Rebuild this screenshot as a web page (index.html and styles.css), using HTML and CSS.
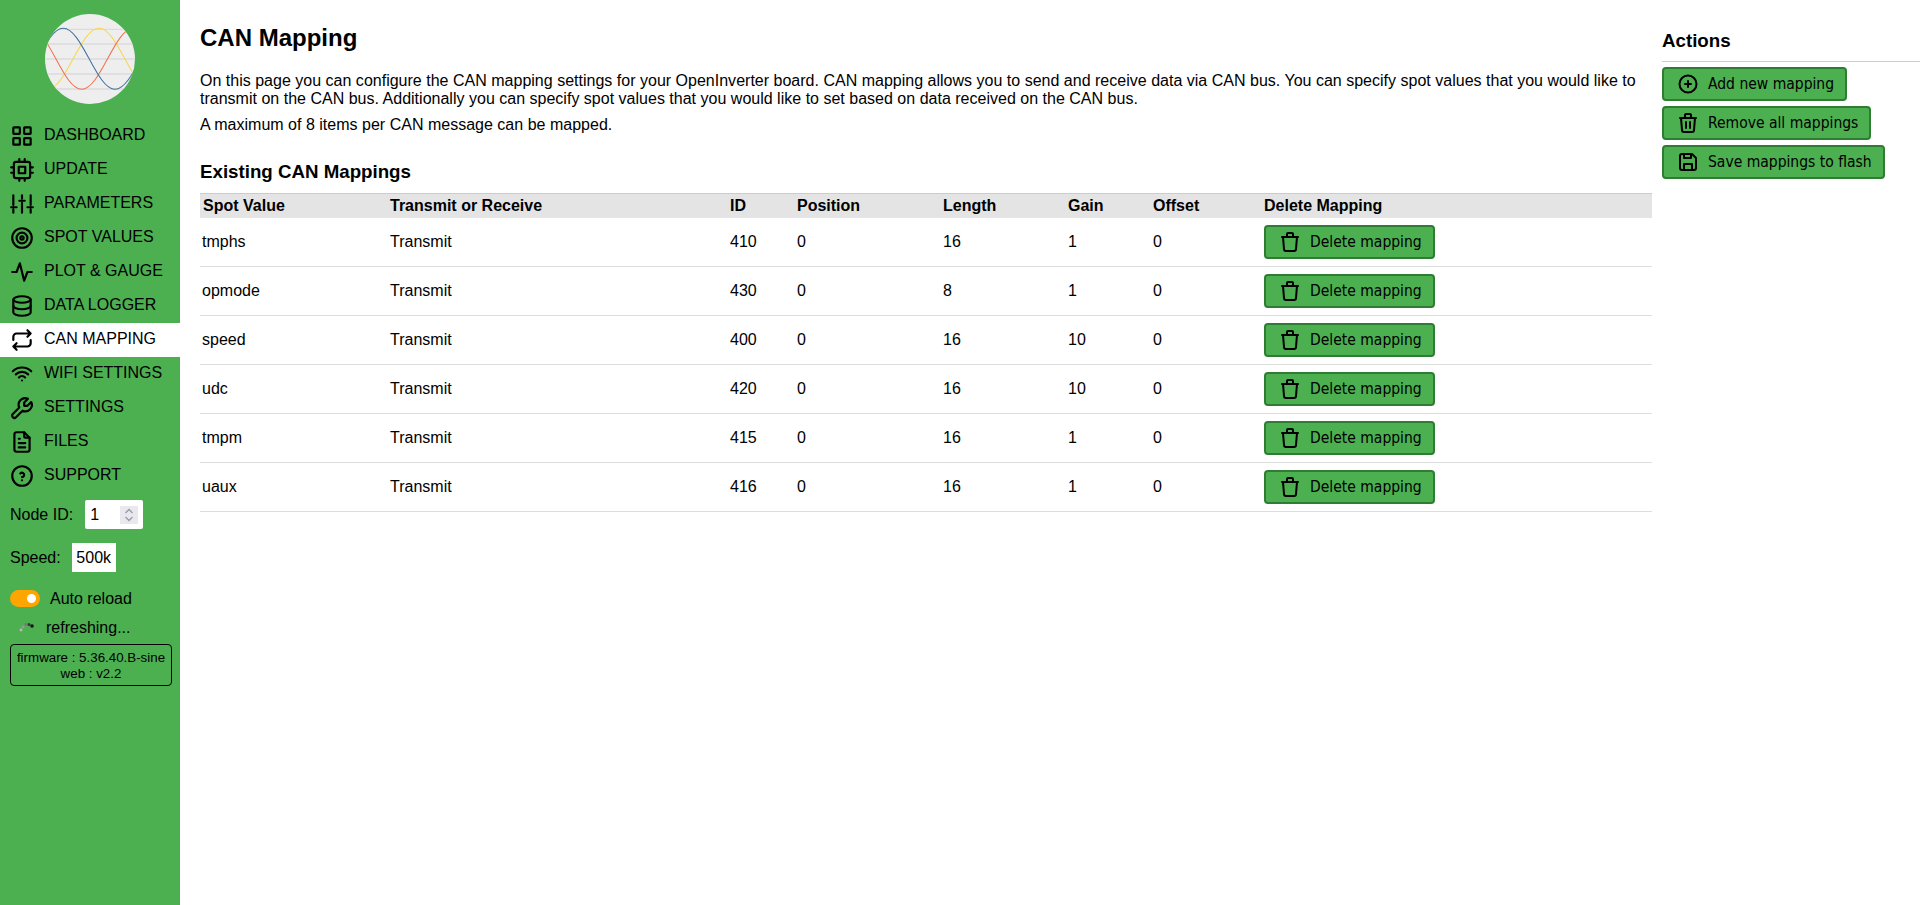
FILE: index.html
```html
<!DOCTYPE html>
<html lang="en">
<head>
<meta charset="utf-8">
<title>CAN Mapping</title>
<link rel="stylesheet" href="styles.css">
</head>
<body>
<svg class="sprite" width="0" height="0">
  <defs>
    <symbol id="i-grid" viewBox="0 0 24 24"><rect x="4" y="4" width="6" height="6" rx="0.5"/><rect x="14" y="4" width="6" height="6" rx="0.5"/><rect x="4" y="14" width="6" height="6" rx="0.5"/><rect x="14" y="14" width="6" height="6" rx="0.5"/></symbol>
    <symbol id="i-cpu" viewBox="0 0 24 24"><rect x="4.5" y="4.5" width="15" height="15" rx="2"/><path d="M9 9h6v6h-6z"/><path d="M2 9.500h2M2 14.500h2M9.500 2v2M14.500 2v2M22 9.500h-2M22 14.500h-2M14.500 22v-2M9.500 22v-2"/></symbol>
    <symbol id="i-sliders" viewBox="0 0 24 24"><path d="M4 4v9M4 17v3M12 4v3M12 11v9M20 4v9M20 17v3M2 15h5M9.500 9h5M17 15h5"/></symbol>
    <symbol id="i-target" viewBox="0 0 24 24"><circle cx="12" cy="12" r="1.500"/><circle cx="12" cy="12" r="5"/><circle cx="12" cy="12" r="9"/></symbol>
    <symbol id="i-activity" viewBox="0 0 24 24"><path d="M3 12h4l3 -8l4 16l3 -8h4"/></symbol>
    <symbol id="i-db" viewBox="0 0 24 24"><ellipse cx="12" cy="6" rx="8" ry="3"/><path d="M4 6v6a8 3 0 0 0 16 0v-6"/><path d="M4 12v6a8 3 0 0 0 16 0v-6"/></symbol>
    <symbol id="i-repeat" viewBox="0 0 24 24"><path d="M4 12v-3a3 3 0 0 1 3 -3h13m-3 -3l3 3l-3 3"/><path d="M20 12v3a3 3 0 0 1 -3 3h-13m3 3l-3 -3l3 -3"/></symbol>
    <symbol id="i-wifi" viewBox="0 0 24 24"><path d="M12 18l.01 0"/><path d="M9.172 15.172a4 4 0 0 1 5.656 0"/><path d="M6.343 12.343a8 8 0 0 1 11.314 0"/><path d="M3.515 9.515c4.686 -4.687 12.284 -4.687 17 0"/></symbol>
    <symbol id="i-tool" viewBox="0 0 24 24"><path d="M17 10h-3v-3l3.500 -3.500a6 6 0 0 0 -8 8l-6 6a2 2 0 0 0 3 3l6 -6a6 6 0 0 0 8 -8l-3.500 3.500"/></symbol>
    <symbol id="i-file" viewBox="0 0 24 24"><path d="M14 3v4a1 1 0 0 0 1 1h4"/><path d="M17 21h-10a2 2 0 0 1 -2 -2v-14a2 2 0 0 1 2 -2h7l5 5v11a2 2 0 0 1 -2 2z"/><path d="M9 9h1M9 13h6M9 17h6"/></symbol>
    <symbol id="i-help" viewBox="0 0 24 24"><circle cx="12" cy="12" r="9"/><path d="M12 16v.01"/><path d="M12 13a2 2 0 0 0 .914 -3.782a1.98 1.98 0 0 0 -2.414 .483"/></symbol>
    <symbol id="i-plus" viewBox="0 0 24 24"><circle cx="12" cy="12" r="8.500"/><path d="M9 12h6M12 9v6"/></symbol>
    <symbol id="i-trash" viewBox="0 0 24 24"><path d="M4 7h16"/><path d="M10 11v6M14 11v6"/><path d="M5 7l1 12a2 2 0 0 0 2 2h8a2 2 0 0 0 2 -2l1 -12"/><path d="M9 7v-3a1 1 0 0 1 1 -1h4a1 1 0 0 1 1 1v3"/></symbol>
    <symbol id="i-trash2" viewBox="0 0 24 24"><path d="M4 7h16"/><path d="M5 7l1 12a2 2 0 0 0 2 2h8a2 2 0 0 0 2 -2l1 -12"/><path d="M9 7v-3a1 1 0 0 1 1 -1h4a1 1 0 0 1 1 1v3"/></symbol>
    <symbol id="i-save" viewBox="0 0 24 24"><path d="M6 4h10l4 4v10a2 2 0 0 1 -2 2h-12a2 2 0 0 1 -2 -2v-12a2 2 0 0 1 2 -2"/><path d="M8 20v-6h8v6"/><path d="M15 4v4h-7v-4"/></symbol>
  </defs>
</svg>

<nav class="sidebar">
  <div class="logo-wrap">
    <svg class="logo" viewBox="0 0 90 90" width="90" height="90">
      <clipPath id="logo-clip"><circle cx="45" cy="45" r="45"/></clipPath>
      <circle cx="45" cy="45" r="45" fill="#eeeeee"/>
      <g clip-path="url(#logo-clip)">
        <path d="M0 15.300h90M0 30h90M0 45h90M0 60h90M0 75h90" stroke="#dcdcdc" stroke-width="1.300" fill="none"/>
        <g fill="none" stroke-width="1.050">
          <path d="M2.300 75.300C21.100 75.300 35.200 14.300 54 14.300S86.900 75.300 105.700 75.300" stroke="#f7d654"/>
          <path d="M-15 14.300C3.800 14.300 17.900 75.300 36.700 75.300S69.600 14.300 88.400 14.300" stroke="#f1714c"/>
          <path d="M-33.400 75.300C-14.600 75.300 -0.500 14.300 18.300 14.300S51.200 75.300 70 75.300S102.900 14.300 121.700 14.300" stroke="#41709f"/>
        </g>
      </g>
    </svg>
  </div>
  <ul class="menu">
    <li class="menu-item"><svg class="icon"><use href="#i-grid"/></svg><span class="menu-label">DASHBOARD</span></li>
    <li class="menu-item"><svg class="icon"><use href="#i-cpu"/></svg><span class="menu-label">UPDATE</span></li>
    <li class="menu-item"><svg class="icon"><use href="#i-sliders"/></svg><span class="menu-label">PARAMETERS</span></li>
    <li class="menu-item"><svg class="icon"><use href="#i-target"/></svg><span class="menu-label">SPOT VALUES</span></li>
    <li class="menu-item"><svg class="icon"><use href="#i-activity"/></svg><span class="menu-label">PLOT &amp; GAUGE</span></li>
    <li class="menu-item"><svg class="icon"><use href="#i-db"/></svg><span class="menu-label">DATA LOGGER</span></li>
    <li class="menu-item active"><svg class="icon"><use href="#i-repeat"/></svg><span class="menu-label">CAN MAPPING</span></li>
    <li class="menu-item"><svg class="icon"><use href="#i-wifi"/></svg><span class="menu-label">WIFI SETTINGS</span></li>
    <li class="menu-item"><svg class="icon"><use href="#i-tool"/></svg><span class="menu-label">SETTINGS</span></li>
    <li class="menu-item"><svg class="icon"><use href="#i-file"/></svg><span class="menu-label">FILES</span></li>
    <li class="menu-item"><svg class="icon"><use href="#i-help"/></svg><span class="menu-label">SUPPORT</span></li>
  </ul>
  <div class="field node-field">
    <label class="field-label" for="node">Node ID:</label>
    <span class="number-box">
      <input class="node-input" id="node" type="text" value="1">
      <span class="spin">
        <svg viewBox="0 0 10 16" width="10" height="16"><path d="M1.500 6l3.500 -3.500l3.500 3.500M1.500 10l3.500 3.500l3.500 -3.500"/></svg>
      </span>
    </span>
  </div>
  <div class="field speed-field">
    <span class="field-label">Speed:</span>
    <span class="speed-value">500k</span>
  </div>
  <div class="toggle-row">
    <span class="toggle"><span class="toggle-knob"></span></span>
    <span class="row-text">Auto reload</span>
  </div>
  <div class="refresh-row">
    <svg class="spinner" viewBox="0 0 16 10" width="16" height="10">
      <circle cx="13" cy="4" r="1.800" fill="#111"/>
      <circle cx="10" cy="2.500" r="1.500" fill="#333"/>
      <circle cx="7" cy="2.500" r="1.400" fill="#777"/>
      <circle cx="4" cy="5" r="1.400" fill="#999"/>
      <circle cx="2" cy="8" r="1.400" fill="#bbb"/>
    </svg>
    <span class="row-text">refreshing...</span>
  </div>
  <div class="version">firmware : 5.36.40.B-sine<br>web : v2.2</div>
</nav>

<main class="content">
  <h1 class="title">CAN Mapping</h1>
  <p class="intro">On this page you can configure the CAN mapping settings for your OpenInverter board. CAN mapping allows you to send and receive data via CAN bus. You can specify spot values that you would like to transmit on the CAN bus. Additionally you can specify spot values that you would like to set based on data received on the CAN bus.</p>
  <p class="intro note">A maximum of 8 items per CAN message can be mapped.</p>
  <h2 class="subtitle">Existing CAN Mappings</h2>
  <table class="mappings">
    <colgroup>
      <col class="c-spot"><col class="c-dir"><col class="c-id"><col class="c-pos"><col class="c-len"><col class="c-gain"><col class="c-off"><col>
    </colgroup>
    <thead>
      <tr><th>Spot Value</th><th>Transmit or Receive</th><th>ID</th><th>Position</th><th>Length</th><th>Gain</th><th>Offset</th><th>Delete Mapping</th></tr>
    </thead>
    <tbody>
      <tr><td>tmphs</td><td>Transmit</td><td>410</td><td>0</td><td>16</td><td>1</td><td>0</td><td><button class="btn" type="button"><svg class="icon"><use href="#i-trash2"/></svg>Delete mapping</button></td></tr>
      <tr><td>opmode</td><td>Transmit</td><td>430</td><td>0</td><td>8</td><td>1</td><td>0</td><td><button class="btn" type="button"><svg class="icon"><use href="#i-trash2"/></svg>Delete mapping</button></td></tr>
      <tr><td>speed</td><td>Transmit</td><td>400</td><td>0</td><td>16</td><td>10</td><td>0</td><td><button class="btn" type="button"><svg class="icon"><use href="#i-trash2"/></svg>Delete mapping</button></td></tr>
      <tr><td>udc</td><td>Transmit</td><td>420</td><td>0</td><td>16</td><td>10</td><td>0</td><td><button class="btn" type="button"><svg class="icon"><use href="#i-trash2"/></svg>Delete mapping</button></td></tr>
      <tr><td>tmpm</td><td>Transmit</td><td>415</td><td>0</td><td>16</td><td>1</td><td>0</td><td><button class="btn" type="button"><svg class="icon"><use href="#i-trash2"/></svg>Delete mapping</button></td></tr>
      <tr><td>uaux</td><td>Transmit</td><td>416</td><td>0</td><td>16</td><td>1</td><td>0</td><td><button class="btn" type="button"><svg class="icon"><use href="#i-trash2"/></svg>Delete mapping</button></td></tr>
    </tbody>
  </table>
</main>

<aside class="actions">
  <h3 class="actions-title">Actions</h3>
  <div class="actions-list">
    <button class="btn" type="button"><svg class="icon"><use href="#i-plus"/></svg>Add new mapping</button>
    <button class="btn" type="button"><svg class="icon"><use href="#i-trash"/></svg>Remove all mappings</button>
    <button class="btn" type="button"><svg class="icon"><use href="#i-save"/></svg>Save mappings to flash</button>
  </div>
</aside>
</body>
</html>
```

FILE: styles.css
```css
* { box-sizing: border-box; }
html, body { margin: 0; padding: 0; }
body {
  display: flex;
  min-height: 905px;
  font-family: "Liberation Sans", Arial, sans-serif;
  font-size: 16px;
  color: #000;
  background: #fff;
}
.sprite { position: absolute; }
.icon {
  width: 24px;
  height: 24px;
  flex: none;
  fill: none;
  stroke: #000;
  stroke-width: 2;
  stroke-linecap: round;
  stroke-linejoin: round;
}

.sidebar {
  flex: none;
  width: 180px;
  background: #4caf50;
}
.logo-wrap {
  display: flex;
  justify-content: center;
  padding: 14px 0 15px;
}
.logo { display: block; }
.menu { list-style: none; margin: 0; padding: 0; }
.menu-item {
  display: flex;
  align-items: center;
  gap: 9px;
  height: 34px;
  padding-left: 9px;
  font-size: 16px;
  white-space: nowrap;
}
.menu-item .icon { width: 26px; height: 26px; }
.menu-label { margin-bottom: 2px; }
.menu-item.active { background: #fff; }
.field { display: flex; align-items: center; padding-left: 10px; height: 29px; }
.node-field { margin-top: 7px; gap: 12px; }
.speed-field { margin-top: 14px; gap: 11px; }
.number-box {
  display: flex;
  align-items: center;
  width: 58px;
  height: 29px;
  border-radius: 2px;
  padding-right: 5px;
  background: #fff;
}
.node-input {
  flex: 1;
  min-width: 0;
  width: 0;
  height: 29px;
  border: 0;
  padding: 0 0 0 5px;
  background: transparent;
  color: #000;
  font: 16px "Liberation Sans", Arial, sans-serif;
}
.spin {
  display: flex;
  align-items: center;
  justify-content: center;
  width: 18px;
  height: 18px;
  background: #e8e8ee;
}
.spin svg {
  fill: none;
  stroke: #9a9aa2;
  stroke-width: 1.300;
}
.speed-value {
  display: flex;
  align-items: center;
  justify-content: center;
  width: 44px;
  height: 29px;
  background: #fff;
}
.toggle-row {
  display: flex;
  align-items: center;
  gap: 10px;
  margin: 17px 0 0 10px;
  height: 18px;
}
.toggle {
  display: flex;
  align-items: center;
  justify-content: flex-end;
  width: 30px;
  height: 17px;
  padding-right: 4px;
  border-radius: 9px;
  background: #ffa500;
}
.toggle-knob { width: 9px; height: 9px; border-radius: 50%; background: #fff; }
.row-text { margin-top: 2px; }
.refresh-row {
  display: flex;
  align-items: center;
  gap: 11px;
  margin: 11px 0 0 19px;
  height: 18px;
}
.version {
  width: 162px;
  margin: 8px 0 0 10px;
  padding: 5px 0 4px;
  border: 1px solid #000;
  border-radius: 4px;
  font-size: 13.330px;
  line-height: 15.500px;
  text-align: center;
}

.content {
  flex: 1;
  min-width: 0;
  padding: 0 10px 0 20px;
}
.title { margin: 24px 0 0; font-size: 24px; line-height: 28px; }
.intro { margin: 20px 0 0; line-height: 18px; letter-spacing: 0.010px; }
.note { margin-top: 8px; }
.subtitle { margin: 27px 0 0; font-size: 18.720px; line-height: 22px; }
.mappings {
  width: 100%;
  margin-top: 10px;
  border-collapse: collapse;
  table-layout: fixed;
}
.c-spot { width: 188px; }
.c-dir { width: 340px; }
.c-id { width: 67px; }
.c-pos { width: 146px; }
.c-len { width: 125px; }
.c-gain { width: 85px; }
.c-off { width: 111px; }
.mappings th {
  height: 24px;
  padding: 0 2px;
  background: #e4e4e4;
  border-top: 1px solid #ccc;
  text-align: left;
  font-weight: bold;
}
.mappings th:first-child { padding-left: 3px; }
.mappings td {
  height: 49px;
  padding: 0 2px;
  border-bottom: 1px solid #ddd;
}
.btn {
  display: inline-flex;
  align-items: center;
  gap: 8px;
  height: 34px;
  padding: 0 11px 0 12px;
  border: 2px solid #2e7d32;
  border-radius: 4px;
  background: #4caf50;
  color: #000;
  font-family: "DejaVu Sans Condensed", "DejaVu Sans", sans-serif;
  font-size: 15.500px;
  white-space: nowrap;
}

.actions { flex: none; width: 258px; }
.actions-title {
  margin: 0;
  padding: 30px 0 9px;
  border-bottom: 1px solid #ccc;
  font-size: 18.720px;
  line-height: 22px;
}
.actions-list {
  display: flex;
  flex-direction: column;
  align-items: flex-start;
  gap: 5px;
  margin-top: 5px;
}
```
